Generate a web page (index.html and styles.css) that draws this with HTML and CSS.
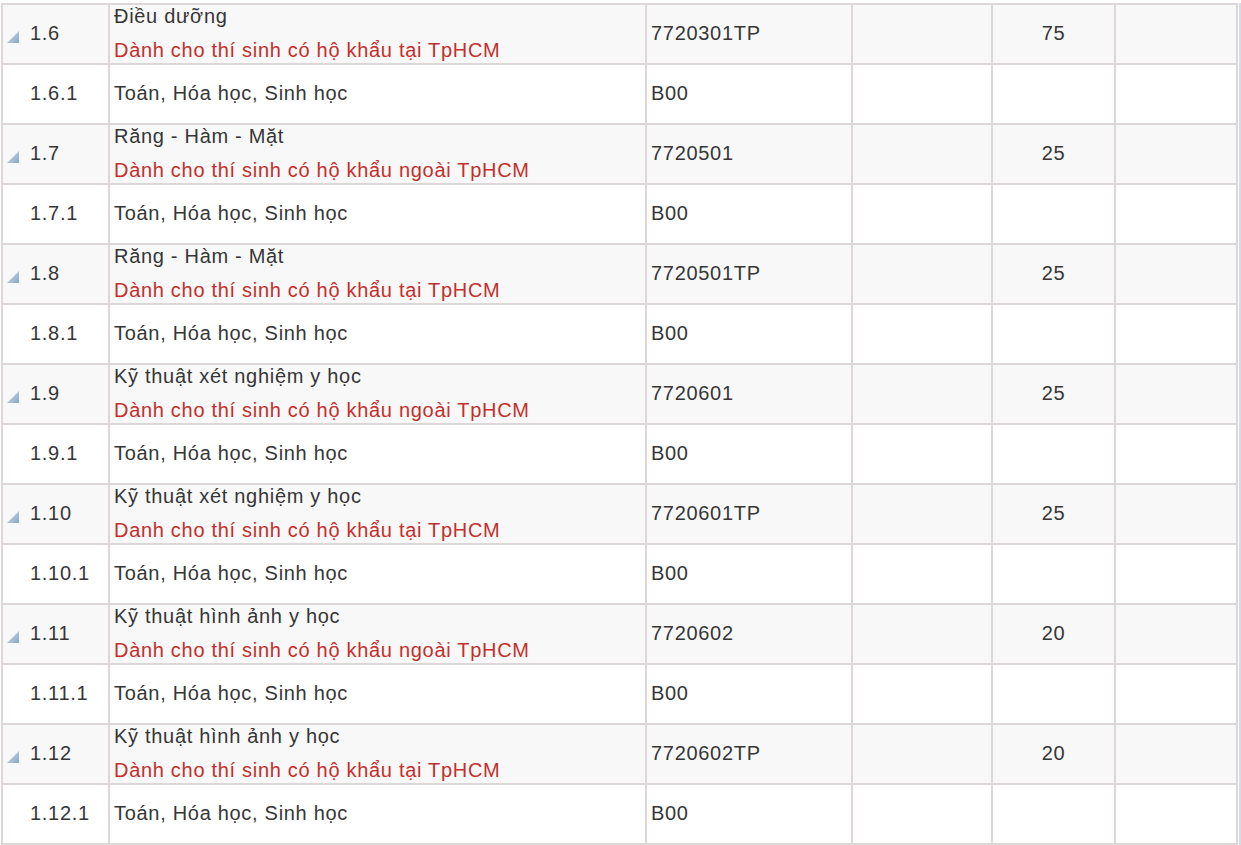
FILE: index.html
```html
<!DOCTYPE html>
<html lang="vi">
<head>
<meta charset="utf-8">
<title>Chỉ tiêu tuyển sinh</title>
<link rel="stylesheet" href="styles.css">
</head>
<body>
<div class="wrap">
<table class="grid">
  <colgroup>
    <col class="c1"><col class="c2"><col class="c3"><col class="c4"><col class="c5"><col class="c6">
  </colgroup>
  <tbody>
    <tr class="parent">
      <td class="idx lvl1"><svg class="tri" width="12" height="12" viewBox="0 0 12 12"><defs><linearGradient id="g1" x1="0" y1="0" x2="1" y2="1"><stop offset="0" stop-color="#d3dfeb"/><stop offset="1" stop-color="#8aa6c3"/></linearGradient></defs><polygon points="0,12 12,0 12,12" fill="url(#g1)"/></svg>1.6</td>
      <td class="name"><div class="nm">Điều dưỡng</div><div class="note">Dành cho thí sinh có hộ khẩu tại TpHCM</div></td>
      <td class="code">7720301TP</td>
      <td></td>
      <td class="num">75</td>
      <td></td>
    </tr>
    <tr class="child">
      <td class="idx lvl2">1.6.1</td>
      <td class="name">Toán, Hóa học, Sinh học</td>
      <td class="code">B00</td>
      <td></td><td></td><td></td>
    </tr>
    <tr class="parent">
      <td class="idx lvl1"><svg class="tri" width="12" height="12" viewBox="0 0 12 12"><polygon points="0,12 12,0 12,12" fill="url(#g1)"/></svg>1.7</td>
      <td class="name"><div class="nm">Răng - Hàm - Mặt</div><div class="note">Dành cho thí sinh có hộ khẩu ngoài TpHCM</div></td>
      <td class="code">7720501</td>
      <td></td>
      <td class="num">25</td>
      <td></td>
    </tr>
    <tr class="child">
      <td class="idx lvl2">1.7.1</td>
      <td class="name">Toán, Hóa học, Sinh học</td>
      <td class="code">B00</td>
      <td></td><td></td><td></td>
    </tr>
    <tr class="parent">
      <td class="idx lvl1"><svg class="tri" width="12" height="12" viewBox="0 0 12 12"><polygon points="0,12 12,0 12,12" fill="url(#g1)"/></svg>1.8</td>
      <td class="name"><div class="nm">Răng - Hàm - Mặt</div><div class="note">Dành cho thí sinh có hộ khẩu tại TpHCM</div></td>
      <td class="code">7720501TP</td>
      <td></td>
      <td class="num">25</td>
      <td></td>
    </tr>
    <tr class="child">
      <td class="idx lvl2">1.8.1</td>
      <td class="name">Toán, Hóa học, Sinh học</td>
      <td class="code">B00</td>
      <td></td><td></td><td></td>
    </tr>
    <tr class="parent">
      <td class="idx lvl1"><svg class="tri" width="12" height="12" viewBox="0 0 12 12"><polygon points="0,12 12,0 12,12" fill="url(#g1)"/></svg>1.9</td>
      <td class="name"><div class="nm">Kỹ thuật xét nghiệm y học</div><div class="note">Dành cho thí sinh có hộ khẩu ngoài TpHCM</div></td>
      <td class="code">7720601</td>
      <td></td>
      <td class="num">25</td>
      <td></td>
    </tr>
    <tr class="child">
      <td class="idx lvl2">1.9.1</td>
      <td class="name">Toán, Hóa học, Sinh học</td>
      <td class="code">B00</td>
      <td></td><td></td><td></td>
    </tr>
    <tr class="parent">
      <td class="idx lvl1"><svg class="tri" width="12" height="12" viewBox="0 0 12 12"><polygon points="0,12 12,0 12,12" fill="url(#g1)"/></svg>1.10</td>
      <td class="name"><div class="nm">Kỹ thuật xét nghiệm y học</div><div class="note">Danh cho thí sinh có hộ khẩu tại TpHCM</div></td>
      <td class="code">7720601TP</td>
      <td></td>
      <td class="num">25</td>
      <td></td>
    </tr>
    <tr class="child">
      <td class="idx lvl2">1.10.1</td>
      <td class="name">Toán, Hóa học, Sinh học</td>
      <td class="code">B00</td>
      <td></td><td></td><td></td>
    </tr>
    <tr class="parent">
      <td class="idx lvl1"><svg class="tri" width="12" height="12" viewBox="0 0 12 12"><polygon points="0,12 12,0 12,12" fill="url(#g1)"/></svg>1.11</td>
      <td class="name"><div class="nm">Kỹ thuật hình ảnh y học</div><div class="note">Dành cho thí sinh có hộ khẩu ngoài TpHCM</div></td>
      <td class="code">7720602</td>
      <td></td>
      <td class="num">20</td>
      <td></td>
    </tr>
    <tr class="child">
      <td class="idx lvl2">1.11.1</td>
      <td class="name">Toán, Hóa học, Sinh học</td>
      <td class="code">B00</td>
      <td></td><td></td><td></td>
    </tr>
    <tr class="parent">
      <td class="idx lvl1"><svg class="tri" width="12" height="12" viewBox="0 0 12 12"><polygon points="0,12 12,0 12,12" fill="url(#g1)"/></svg>1.12</td>
      <td class="name"><div class="nm">Kỹ thuật hình ảnh y học</div><div class="note">Dành cho thí sinh có hộ khẩu tại TpHCM</div></td>
      <td class="code">7720602TP</td>
      <td></td>
      <td class="num">20</td>
      <td></td>
    </tr>
    <tr class="child">
      <td class="idx lvl2">1.12.1</td>
      <td class="name">Toán, Hóa học, Sinh học</td>
      <td class="code">B00</td>
      <td></td><td></td><td></td>
    </tr>
  </tbody>
</table>
<div class="edge"></div>
</div>
</body>
</html>
```
FILE: styles.css
```css
html, body {
  margin: 0;
  padding: 0;
  background: #ffffff;
}
body {
  font-family: "Liberation Sans", Arial, sans-serif;
  font-size: 20px;
  letter-spacing: 0.7px;
  color: #363636;
  overflow: hidden;
}
.wrap {
  display: flex;
  align-items: stretch;
  width: 1241px;
  padding-top: 3px;
  box-sizing: border-box;
  padding-left: 1px;
}
.grid {
  border-collapse: separate;
  border-spacing: 0;
  table-layout: fixed;
  width: 1237px;
  border-top: 2px solid #ddd7d7;
  border-left: 2px solid #ddd7d7;
}
.c1 { width: 107px; }
.c2 { width: 537px; }
.c3 { width: 206px; }
.c4 { width: 140px; }
.c5 { width: 123px; }
.c6 { width: 122px; }
.grid td {
  height: 56px;
  padding: 0 4px 2px;
  border-right: 2px solid #ddd7d7;
  border-bottom: 2px solid #ddd7d7;
  vertical-align: middle;
  line-height: 22px;
  white-space: nowrap;
  overflow: hidden;
}
.parent td { background: #f8f8f8; }
.child td { background: #ffffff; }
.grid td.lvl1 { padding-left: 4px; }
.grid td.lvl2 { padding-left: 27px; }
.tri {
  display: inline-block;
  vertical-align: -3px;
  margin-right: 11px;
}
.note {
  color: #c42f2b;
  margin-top: 12px;
}
.grid td.num { text-align: center; }
.edge {
  width: 3px;
  margin-left: 1px;
  background: #d3dde8;
}
```
